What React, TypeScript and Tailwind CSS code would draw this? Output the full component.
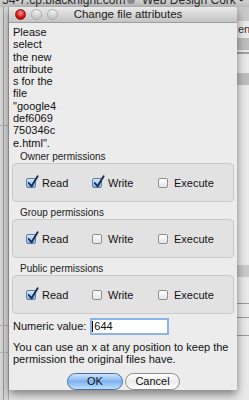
import React from "react";

const font = { fontFamily: '"Liberation Sans", Arial, sans-serif' };

const Check = ({ checked }: { checked: boolean }) => (
  <span
    className={
      "relative inline-block shrink-0 w-[10px] h-[10px] rounded-[2px] border " +
      (checked
        ? "border-[#5a7eb0] bg-gradient-to-b from-[#d6e7fc] to-[#8db5ea]"
        : "border-[#8e8e8e] bg-gradient-to-b from-[#ffffff] to-[#e4e4e4]")
    }
  >
    {checked && (
      <svg className="absolute left-[0px] top-[-4px]" width="12" height="13" viewBox="0 0 12 13">
        <path d="M1.8 8 L4.6 11.3 L10.6 1.2" fill="none" stroke="#1b2c4c" strokeWidth="1.9" strokeLinecap="round" strokeLinejoin="round" />
      </svg>
    )}
  </span>
);

const Option = ({ label, checked }: { label: string; checked: boolean }) => (
  <div className="w-[66px] flex items-center gap-[6px]">
    <Check checked={checked} />
    <span>{label}</span>
  </div>
);

const Group = ({ title, perms }: { title: string; perms: boolean[] }) => (
  <div className="flex flex-col">
    <div className="h-[13px] pl-[8px] text-[10px] leading-[13px] text-[#222]">{title}</div>
    <div className="h-[39px] rounded-[4px] border border-[#cbcbcb] bg-[#e2e2e2] flex items-center pl-[13px] pt-[1px]">
      <Option label="Read" checked={perms[0]} />
      <Option label="Write" checked={perms[1]} />
      <Option label="Execute" checked={perms[2]} />
    </div>
  </div>
);

export default function App() {
  return (
    <div className="relative w-[249px] h-[400px] overflow-hidden bg-[#dcdcdc] text-[#111]" style={font}>
      {/* background browser window */}
      <div className="absolute inset-0 bg-[#e4e4e4]">
        <div className="h-[7px] bg-gradient-to-b from-[#d0d0d0] to-[#bdbdbd] relative overflow-hidden">
          <span className="absolute left-[2px] top-[-7px] text-[12px] leading-[14px] text-[#2a2a2a]">54-7.cp.blacknight.com</span>
          <span className="absolute left-[127px] top-[-4px] w-[8px] h-[8px] rounded-full bg-[#8a8a8a]" />
          <span className="absolute left-[142px] top-[-7px] text-[12px] leading-[14px] text-[#2a2a2a]">Web Design Cork - js</span>
        </div>
        <div className="absolute left-[0px] top-[7px] w-[9px] h-[393px] bg-[#d6d6d6] border-r border-[#a8a8a8]">
          <div className="absolute left-[3px] top-[0px] w-[1px] h-full bg-[#9a9a9a]" />
          <div className="absolute left-[0px] top-[118px] w-full h-[1px] bg-[#b0b0b0]" />
          <div className="absolute left-[0px] top-[318px] w-full h-[1px] bg-[#b0b0b0]" />
          <div className="absolute left-[0px] top-[345px] w-full h-[1px] bg-[#b0b0b0]" />
        </div>
        <div className="absolute left-[237px] top-[7px] w-[12px] h-[393px] bg-[#e9e9e9] overflow-hidden">
          <div className="absolute left-[0px] top-[0px] w-full h-[14px] bg-[#c9c9c9]" />
          <span className="absolute left-[1px] top-[16px] text-[11px] leading-[12px] text-[#333]">ene</span>
          <div className="absolute left-[0px] top-[31px] w-full h-[12px] bg-[#bdbdbd]" />
          <div className="absolute left-[0px] top-[45px] w-full h-[2px] bg-[#a0a0a0]" />
          <div className="absolute left-[0px] top-[66px] w-full h-[12px] bg-[#bdbdbd]" />
          <div className="absolute left-[0px] top-[258px] w-full h-[12px] bg-[#c9c9c9]" />
          <div className="absolute left-[0px] top-[296px] w-full h-[1px] bg-[#9a9a9a]" />
          <div className="absolute left-[0px] top-[310px] w-full h-[1px] bg-[#9a9a9a]" />
          <div className="absolute left-[0px] top-[328px] w-full h-[1px] bg-[#9a9a9a]" />
        </div>
      </div>

      {/* dialog */}
      <div className="absolute left-[9px] top-[7px] w-[228px] h-[383px] flex flex-col bg-[#ececec] shadow-[0_4px_10px_rgba(0,0,0,0.45)] rounded-t-[4px]">
        <div className="h-[16px] shrink-0 flex items-center relative rounded-t-[4px] bg-gradient-to-b from-[#e9e9e9] to-[#c4c4c4] border-b border-[#9e9e9e]">
          <div className="flex gap-[5px] pl-[6px]">
            <span className="w-[11px] h-[11px] rounded-full bg-[radial-gradient(circle_at_50%_35%,#ff9a9a,#d60d0d_60%,#8a0000)] border border-[#8f1d1d]" />
            <span className="w-[11px] h-[11px] rounded-full bg-gradient-to-b from-[#f4f4f4] to-[#c2c2c2] border border-[#a9a9a9]" />
            <span className="w-[11px] h-[11px] rounded-full bg-gradient-to-b from-[#f4f4f4] to-[#c2c2c2] border border-[#a9a9a9]" />
          </div>
          <div className="absolute left-[60px] right-[0px] top-[0px] pr-[50px] text-center text-[11.5px] leading-[15px] text-[#222]">Change file attributes</div>
        </div>

        <div className="flex-1 flex flex-col px-[3px] pt-[3px] text-[11px]">
          <div className="pl-[1px] leading-[12.3px]">
            Please<br />select<br />the new<br />attribute<br />s for the<br />file<br />"google4<br />def6069<br />750346c<br />e.html".
          </div>

          <div className="mt-[1px] flex flex-col gap-[4px]">
            <Group title="Owner permissions" perms={[true, true, false]} />
            <Group title="Group permissions" perms={[true, false, false]} />
            <Group title="Public permissions" perms={[true, false, false]} />
          </div>

          <div className="mt-[4px] flex items-center pl-[1px]">
            <span>Numeric value:</span>
            <div className="ml-[4px] w-[79px] h-[17px] border-2 border-[#8ab3e8] bg-white flex items-center leading-none">
              <span className="w-[1px] h-[11px] bg-[#000] mr-[1px]" />
              644
            </div>
          </div>

          <div className="mt-[6px] pl-[1px] leading-[12px]">
            You can use an x at any position to keep the permission the original files have.
          </div>

          <div className="mt-[8px] flex justify-center gap-[2px] pl-[1px]">
            <button className="w-[56px] h-[17px] rounded-full border border-[#4a6ea3] bg-gradient-to-b from-[#cfe5fc] via-[#7db3ee] to-[#bfe0fb] text-[11px] leading-none">OK</button>
            <button className="w-[55px] h-[17px] rounded-full border border-[#8a8a8a] bg-gradient-to-b from-[#ffffff] via-[#ececec] to-[#ffffff] text-[11px] leading-none">Cancel</button>
          </div>
        </div>
      </div>
    </div>
  );
}
